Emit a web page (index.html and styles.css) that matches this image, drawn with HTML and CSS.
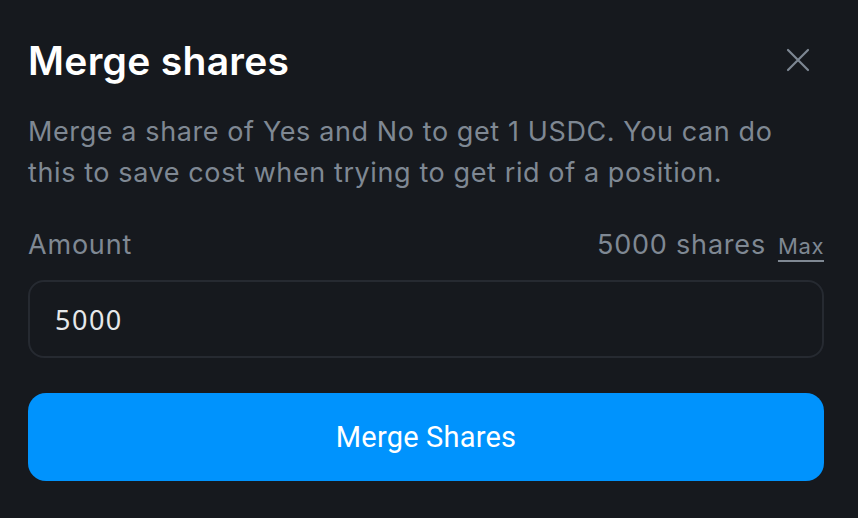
FILE: index.html
```html
<!DOCTYPE html>
<html lang="en">
 <head>
  <meta charset="UTF-8" />
  <title>Merge shares</title>
  <link rel="stylesheet" href="styles.css">
 </head>
 <body>
  <div class="modal">
   <header class="modal-head">
    <h1>Merge shares</h1>
    <button class="close" aria-label="Close">
     <svg width="24" height="24" viewBox="0 0 24 24" fill="none" stroke="#7d8793" stroke-width="2.2" stroke-linecap="round">
      <path d="M2 2L22 22M22 2L2 22" />
     </svg>
    </button>
   </header>
   <p class="desc">Merge a share of Yes and No to get 1 USDC. You can do<br>this to save cost when trying to get rid of a position.</p>
   <div class="amount-row">
    <span>Amount</span>
    <span class="balance">5000 shares <a href="#" class="max">Max</a></span>
   </div>
   <div class="field">
    <input type="text" value="5000" />
   </div>
   <button class="submit">Merge Shares</button>
  </div>
 </body>
</html>
```

FILE: styles.css
```css
body {
 margin: 0;
 background: #16191e;
 font-family: Inter, "Noto Sans", sans-serif;
}
.modal {
 padding: 28px 34px 0 28px;
 display: flex;
 flex-direction: column;
}
.modal-head {
 display: flex;
 justify-content: space-between;
 align-items: center;
 height: 68px;
 margin-top: -2px;
}
.modal-head h1 {
 margin: 0;
 color: #ffffff;
 font-size: 39px;
 font-weight: 600;
 letter-spacing: 0.3px;
}
.close {
 background: none;
 border: none;
 padding: 0;
 margin-right: 14px;
 display: flex;
 cursor: pointer;
}
.desc {
 margin: 17px 0 0 0;
 color: #7f8893;
 font-size: 27px;
 line-height: 41px;
 letter-spacing: 0.6px;
}
.amount-row {
 display: flex;
 justify-content: space-between;
 align-items: baseline;
 margin-top: 34px;
 color: #7f8893;
 font-size: 27px;
 line-height: 36px;
 letter-spacing: 0.8px;
}
.balance {
 display: flex;
 align-items: baseline;
 gap: 12px;
}
.max {
 color: #7f8893;
 font-size: 22px;
 letter-spacing: 0.6px;
 text-decoration: underline;
 text-underline-offset: 6px;
}
.field {
 margin-top: 16px;
}
.field input {
 box-sizing: border-box;
 width: 100%;
 height: 78px;
 background: #16191e;
 border: 2px solid #262a31;
 border-radius: 16px;
 padding: 0 25px;
 color: #e6e8ea;
 font-family: "Noto Sans", Inter, sans-serif;
 font-size: 27px;
 letter-spacing: 1.5px;
 outline: none;
}
.submit {
 margin-top: 35px;
 height: 88px;
 background: #0093fd;
 border: none;
 border-radius: 18px;
 color: #ffffff;
 font-family: Roboto, sans-serif;
 font-size: 29px;
 letter-spacing: 0.2px;
 cursor: pointer;
}
```
